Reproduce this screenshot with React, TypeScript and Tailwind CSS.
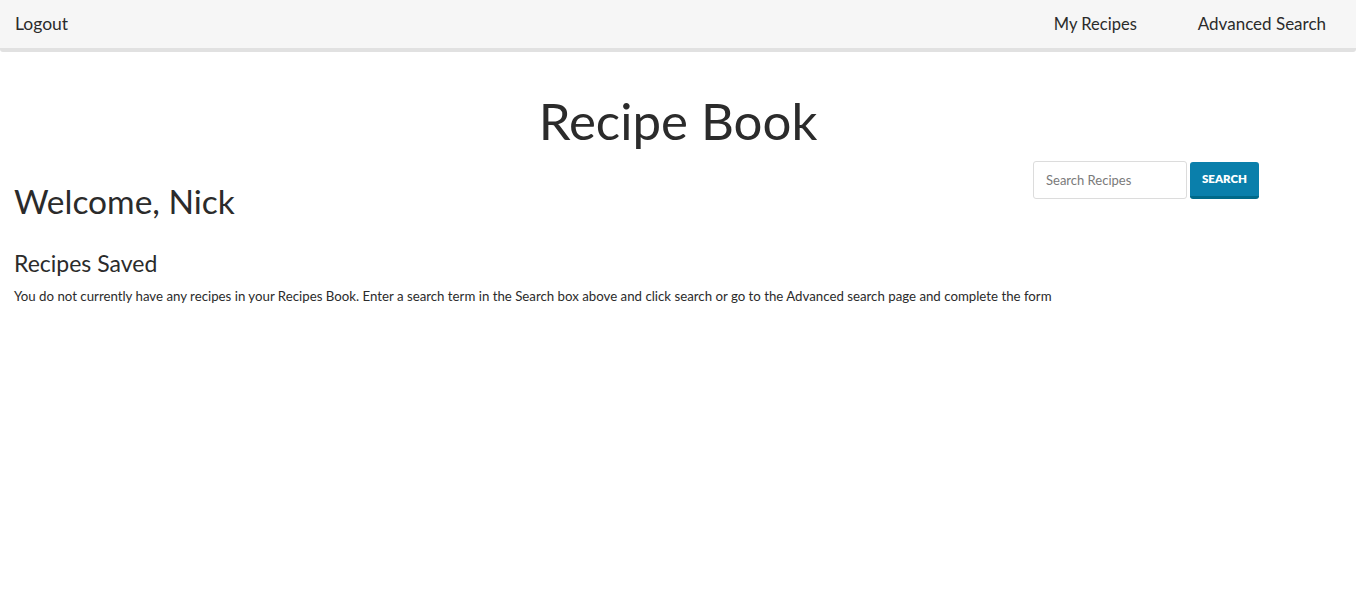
import React from "react";

export default function App() {
  return (
    <div className="min-h-[606px] bg-white text-[#2b2b2b]" style={{ fontFamily: "Lato, 'Noto Sans', sans-serif" }}>
      <nav className="flex h-[52px] items-start justify-between rounded-b-[3px] border-b-4 border-[#e1e1e1] bg-[#f6f6f6]">
        <a className="ml-[15px] mt-[13px] text-[17.5px] leading-[22px] text-[#2b2b2b]">Logout</a>
        <div className="mr-[30px] mt-[13px] flex gap-[61px] text-[17px] leading-[22px]">
          <a className="text-[16.5px]">My Recipes</a>
          <a>Advanced Search</a>
        </div>
      </nav>
      <main className="px-[14px]">
        <h1 className="mt-[38px] text-center text-[51px] leading-[61px]">Recipe Book</h1>
        <div className="flex items-start justify-between">
          <h2 className="mt-[30px] text-[33.5px] leading-[40px]">Welcome, Nick</h2>
          <form className="mr-[83px] mt-[10px] flex gap-[3px]">
            <input
              placeholder="Search Recipes"
              className="h-[38px] w-[154px] rounded-[3px] border border-[#dcdcdc] px-[12px] text-[13px] text-[#2b2b2b] placeholder:text-[#7a7a7a] outline-none"
            />
            <button
              type="button"
              className="mt-[1px] h-[37px] w-[69px] rounded-[3px] border-b-[3px] border-[#006989] bg-[#0a7fab] text-[11.5px] font-extrabold text-white"
            >
              SEARCH
            </button>
          </form>
        </div>
        <h3 className="mt-[28px] text-[23px] leading-[28px]">Recipes Saved</h3>
        <p className="mt-[10px] text-[13.25px] leading-[18px]">
          You do not currently have any recipes in your Recipes Book. Enter a search term in the Search box above and click search or go to the Advanced search page and complete the form
        </p>
      </main>
    </div>
  );
}
